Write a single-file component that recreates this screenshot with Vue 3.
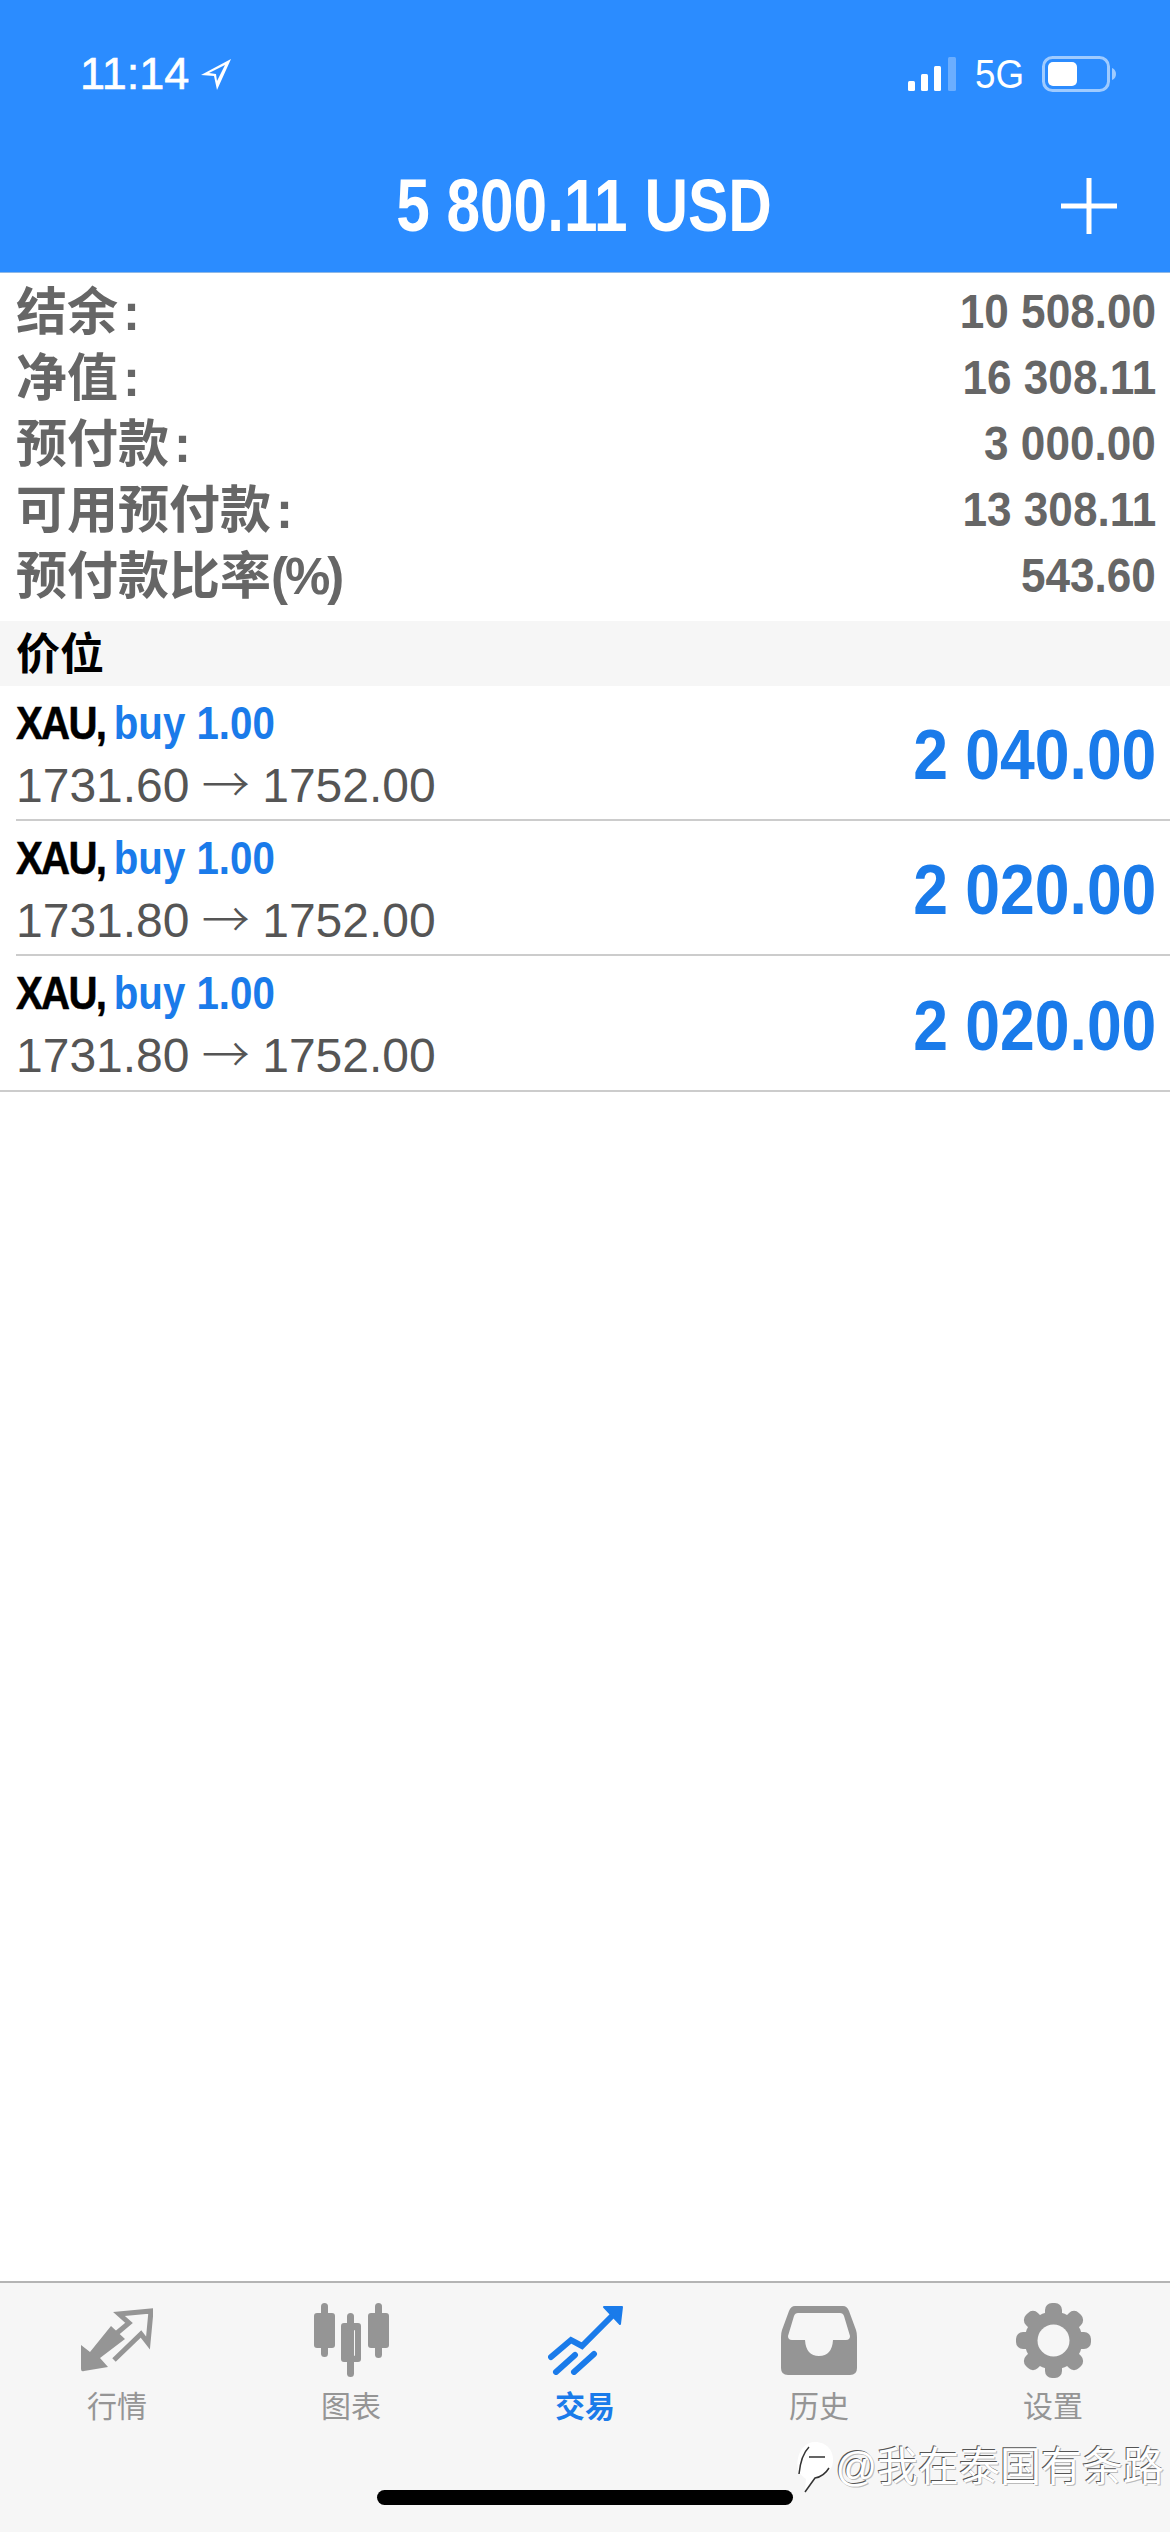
<script setup>
const summary = [
  { label: '结余', tail: ':', value: '10 508.00' },
  { label: '净值', tail: ':', value: '16 308.11' },
  { label: '预付款', tail: ':', value: '3 000.00' },
  { label: '可用预付款', tail: ':', value: '13 308.11' },
  { label: '预付款比率', tail: '(%)', value: '543.60' },
]
const trades = [
  { open: '1731.60', close: '1752.00', profit: '2 040.00' },
  { open: '1731.80', close: '1752.00', profit: '2 020.00' },
  { open: '1731.80', close: '1752.00', profit: '2 020.00' },
]
const tabs = [
  { key: 'quotes', label: '行情' },
  { key: 'charts', label: '图表' },
  { key: 'trade', label: '交易', active: true },
  { key: 'history', label: '历史' },
  { key: 'settings', label: '设置' },
]
</script>

<template>
  <div class="page">
    <header class="header">
      <div class="status">
        <div class="status-left">
          <span class="time">11:14</span>
          <svg class="loc" viewBox="0 0 34 34"><path d="M32 2 L2 18 L15 19 L18 33 Z M26 8 L18 24 L17 17 L10 16 Z" fill="#fff" fill-rule="evenodd"/></svg>
        </div>
        <div class="status-right">
          <svg class="signal" viewBox="0 0 50 34">
            <rect x="0" y="24" width="7" height="10" rx="1.5" fill="#fff"/>
            <rect x="13" y="17" width="7" height="17" rx="1.5" fill="#fff"/>
            <rect x="26" y="9" width="7" height="25" rx="1.5" fill="#fff"/>
            <rect x="40" y="0" width="8" height="34" rx="1.5" fill="#fff" opacity=".3"/>
          </svg>
          <span class="net">5G</span>
          <svg class="battery" viewBox="0 0 74 36">
            <rect x="1.5" y="1.5" width="65" height="33" rx="9" fill="none" stroke="#fff" stroke-opacity=".55" stroke-width="3"/>
            <rect x="6" y="6" width="29" height="24" rx="5" fill="#fff"/>
            <path d="M70 12 C73 13 74 16 74 18 C74 20 73 23 70 24 Z" fill="#fff" opacity=".55"/>
          </svg>
        </div>
      </div>
      <div class="titlebar">
        <span></span>
        <h1 class="title">5 800.11 USD</h1>
        <svg class="plus" viewBox="0 0 56 56"><path d="M28 0 V56 M0 28 H56" stroke="#fff" stroke-width="5" fill="none"/></svg>
      </div>
    </header>

    <section class="summary">
      <div v-for="row in summary" :key="row.label" class="summary-row">
        <span class="summary-label">{{ row.label }}<span class="tail" :class="{ paren: row.tail !== ':' }">{{ row.tail }}</span></span>
        <span class="summary-value">{{ row.value }}</span>
      </div>
    </section>

    <div class="section-head">价位</div>

    <main class="trades">
      <div v-for="(t, i) in trades" :key="i" class="trade">
        <div class="trade-left">
          <div class="trade-top"><b class="sym">XAU,</b> <span class="side">buy 1.00</span></div>
          <div class="trade-prices">{{ t.open }} <span class="arrow">→</span> {{ t.close }}</div>
        </div>
        <div class="profit">{{ t.profit }}</div>
      </div>
    </main>

    <nav class="tabbar">
      <div class="tabs">
        <div v-for="tab in tabs" :key="tab.key" class="tab" :class="{ active: tab.active }">
          <div class="tab-icon">
            <svg v-if="tab.key === 'quotes'" width="72" height="64" viewBox="0 0 72 64">
              <path d="M0 37 L0 61 Q0 64 3 63 L27 59 L19 50 L44 31 L30 18 L9 44 Z" fill="#959595"/>
              <path d="M33 52 L60 26 L67 35 L70 3 L38 6 L48 15 L36 25" fill="none" stroke="#959595" stroke-width="5"/>
            </svg>
            <svg v-else-if="tab.key === 'charts'" width="75" height="74" viewBox="0 0 75 74" fill="#959595">
              <rect x="7" y="0" width="7" height="54" rx="3.5"/>
              <rect x="0" y="10" width="21" height="35" rx="3"/>
              <rect x="33" y="10" width="7" height="64" rx="3.5"/>
              <path fill-rule="evenodd" d="M30 20 H44 Q47 20 47 23 V56 Q47 59 44 59 H30 Q27 59 27 56 V23 Q27 20 30 20 Z M34 27 Q33 27 33 28 V52 Q33 53 34 53 H40 Q41 53 41 52 V28 Q41 27 40 27 Z"/>
              <rect x="61" y="0" width="7" height="55" rx="3.5"/>
              <rect x="54" y="10" width="21" height="35" rx="3"/>
            </svg>
            <svg v-else-if="tab.key === 'trade'" width="75" height="70" viewBox="0 0 75 70" fill="none" stroke="#1a7bea" stroke-width="6" stroke-linecap="round">
              <path d="M3 52 L23 35 L34 41 L69 6"/>
              <path d="M56 2 L74 2 L72 19 Z" fill="#1a7bea" stroke="#1a7bea" stroke-width="2" stroke-linejoin="round"/>
              <path d="M8 67 L27 50"/>
              <path d="M26 67 L46 49"/>
            </svg>
            <svg v-else-if="tab.key === 'history'" width="76" height="69" viewBox="0 0 76 69">
              <path fill="#959595" fill-rule="evenodd" d="M14 0 H62 Q66 0 68 5 L75 24 Q76 27 76 31 V62 Q76 69 69 69 H7 Q0 69 0 62 V31 Q0 27 1 24 L8 5 Q10 0 14 0 Z M17 7 Q14 7 13 10 L7 30 Q7 34 11 34 H24 Q25 50 38 50 Q51 50 52 34 H65 Q69 34 69 30 L63 10 Q62 7 59 7 Z"/>
            </svg>
            <svg v-else width="75" height="75" viewBox="0 0 75 75" fill="#959595">
              <circle cx="37.5" cy="37.5" r="29"/>
              <rect x="29" y="0" width="17" height="75" rx="7"/>
              <rect x="29" y="0" width="17" height="75" rx="7" transform="rotate(45 37.5 37.5)"/>
              <rect x="29" y="0" width="17" height="75" rx="7" transform="rotate(90 37.5 37.5)"/>
              <rect x="29" y="0" width="17" height="75" rx="7" transform="rotate(135 37.5 37.5)"/>
              <circle cx="37.5" cy="37.5" r="16" fill="#f6f6f6"/>
            </svg>
          </div>
          <span class="tab-label">{{ tab.label }}</span>
        </div>
      </div>
      <div class="home"></div>
      <div class="watermark">
        <svg class="wm-logo" viewBox="0 0 40 54" fill="none" stroke="#333" stroke-width="1.5">
          <path d="M20 2 C32 2 39 11 38 22 C37 32 28 38 18 39 L10 50 L11 39 C3 34 1 26 3 18 C5 9 11 2 20 2 Z" fill="#fff" stroke="none"/>
          <path d="M4 34 C5 24 7 14 14 7 M14 17 L30 17 M34 28 C31 33 26 37 20 38 L10 52"/>
        </svg>
        <span>@我在泰国有条路</span>
      </div>
    </nav>
  </div>
</template>

<style>
html, body { margin: 0; background: #fff; }
</style>

<style scoped>
.page {
  position: relative;
  width: 1170px;
  height: 2532px;
  display: flex;
  flex-direction: column;
  overflow: hidden;
  background: #fff;
  font-family: "Liberation Sans", "Noto Sans CJK SC", sans-serif;
}
.header {
  height: 273px;
  flex: none;
  box-sizing: border-box;
  background: #2b8cff;
  border-bottom: 1px solid #8fb8e6;
  padding: 56px 54px 0 80px;
  color: #fff;
}
.status {
  display: flex;
  justify-content: space-between;
  align-items: center;
  height: 36px;
}
.status-left, .status-right { display: flex; align-items: center; }
.time {
  font-size: 45px;
  line-height: 36px;
  display: inline-block;
  width: 107px;
  transform-origin: left center;
  -webkit-text-stroke: .6px #fff;
}
.loc { width: 34px; height: 34px; margin-left: 12px; }
.signal { width: 50px; height: 34px; }
.net {
  font-size: 40px;
  line-height: 36px;
  width: 50px;
  margin-left: 17px;
  display: inline-block;
  transform: scaleX(.92);
  transform-origin: left center;
}
.battery { width: 74px; height: 36px; margin-left: 17px; }
.titlebar {
  display: grid;
  grid-template-columns: 1fr auto 1fr;
  align-items: center;
  margin: 86px -1px 0 -80px;
}
.title {
  margin: 0 0 0 50px;
  font-size: 74px;
  line-height: 56px;
  font-weight: 700;
  width: 470px;
  text-align: center;
  white-space: nowrap;
  transform: scaleX(.815);
}
.plus { width: 56px; height: 56px; justify-self: end; }

.summary { padding: 5px 14px 13px 16px; flex: none; }
.summary-row {
  height: 66px;
  display: flex;
  justify-content: space-between;
  align-items: center;
  color: #666;
}
.summary-label {
  font-size: 51px;
  font-weight: 700;
  line-height: 66px;
  padding-top: 4px;
  white-space: nowrap;
}
.tail { margin-left: 5px; }
.tail.paren { margin-left: 0; letter-spacing: -3px; }
.summary-value {
  font-size: 49px;
  font-weight: 700;
  line-height: 66px;
  white-space: nowrap;
  transform: scaleX(.9);
  transform-origin: right center;
}

.section-head {
  flex: none;
  height: 65px;
  box-sizing: border-box;
  padding-left: 16px;
  background: #f6f6f6;
  color: #000;
  font-size: 44px;
  font-weight: 700;
  line-height: 67px;
}

.trades { flex: 1; }
.trade {
  height: 135px;
  box-sizing: border-box;
  margin-left: 16px;
  padding-right: 14px;
  border-bottom: 2px solid #ccc;
  display: flex;
  justify-content: space-between;
  align-items: center;
}
.trade:last-child { margin-left: 0; padding-left: 16px; height: 136px; }
.trade-top {
  font-size: 46px;
  line-height: 62px;
  padding-top: 4px;
  font-weight: 700;
  color: #1a7bea;
  white-space: nowrap;
  transform: scaleX(.875);
  transform-origin: left center;
}
.sym { color: #000; letter-spacing: -2px; margin-right: -3px; -webkit-text-stroke: .5px #000; }
.trade-prices {
  font-size: 48px;
  line-height: 64px;
  margin-top: -5px;
  color: #555;
  white-space: nowrap;
}
.arrow { font-family: "Noto Sans CJK SC", sans-serif; font-weight: 300; margin: 0 -1px; }
.profit {
  font-size: 71px;
  font-weight: 700;
  line-height: 80px;
  padding-top: 5px;
  color: #1a7bea;
  white-space: nowrap;
  transform: scaleX(.88);
  transform-origin: right center;
}

.tabbar {
  flex: none;
  height: 251px;
  box-sizing: border-box;
  background: #f6f6f6;
  border-top: 2px solid #b4b4b4;
  display: flex;
  flex-direction: column;
}
.tabs { display: flex; height: 207px; }
.tab {
  width: 234px;
  display: flex;
  flex-direction: column;
  align-items: center;
  padding-top: 12px;
  box-sizing: border-box;
  color: #959595;
}
.tab-icon {
  height: 90px;
  display: flex;
  align-items: center;
  justify-content: center;
}
.tab-label { font-size: 30px; line-height: 36px; margin-top: 4px; }
.tab.active { color: #1a7bea; font-weight: 700; }
.home {
  width: 416px;
  height: 15px;
  margin: 0 auto;
  border-radius: 8px;
  background: #000;
}
.watermark {
  position: absolute;
  right: 6px;
  bottom: 38px;
  display: flex;
  align-items: center;
  color: #fff;
  font-size: 41px;
  line-height: 50px;
  white-space: nowrap;
  text-shadow: -1px -1px 0 #555, 1px 1px 0 #bbb;
}
.wm-logo { width: 40px; height: 54px; margin-left: -6px; }
</style>
